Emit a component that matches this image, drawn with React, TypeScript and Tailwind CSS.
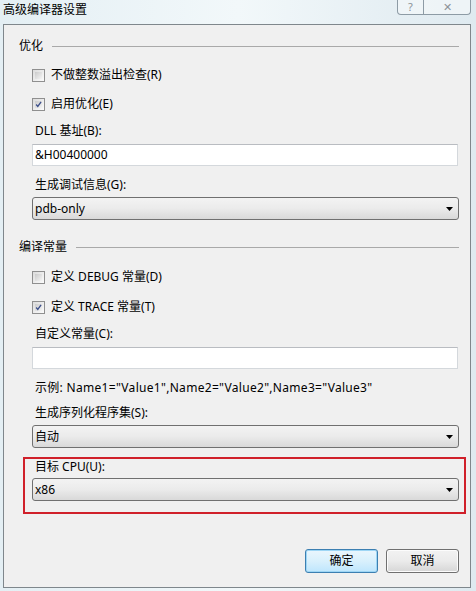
import React from "react";

const font = { fontFamily: '"Noto Sans", "Noto Sans CJK SC", sans-serif' };

function CheckBox({ checked, label }: { checked?: boolean; label: string }) {
  return (
    <div className="flex items-center h-[16px]">
      <span className="w-[13px] h-[13px] border border-[#8f8f8f] bg-gradient-to-br from-[#dcdcdc] to-[#fbfbfb] p-[2px] flex items-center justify-center">
        <span className="w-full h-full bg-gradient-to-br from-[#cbcbcb] to-[#f4f4f4] flex items-center justify-center">
          {checked && (
            <svg width="9" height="9" viewBox="0 0 9 9">
              <path d="M1.5 4.5 L3.6 7 L7.8 1.2" fill="none" stroke="#3c4f8a" strokeWidth="1.7" />
            </svg>
          )}
        </span>
      </span>
      <span className="ml-[6px] text-[12px] leading-[16px] text-[#000]">{label}</span>
    </div>
  );
}

function Label({ children, wide }: { children: React.ReactNode; wide?: boolean }) {
  return (
    <div className={wide ? "pl-[3px] text-[12px] leading-[16px] text-[#000] tracking-[0.3px]" : "pl-[3px] text-[12px] leading-[16px] text-[#000]"}>
      {children}
    </div>
  );
}

function TextBox({ value }: { value?: string }) {
  return (
    <div className="h-[22px] w-[426px] bg-white border border-[#d4d8dc] border-t-[#b9bcc1] flex items-center px-[2px] text-[12px] text-[#000]">
      {value}
    </div>
  );
}

function Select({ value }: { value: string }) {
  return (
    <div className="h-[23px] w-[427px] rounded-[3px] border border-[#707070] bg-gradient-to-b from-[#f3f3f3] via-[#ebebeb] to-[#d9d9d9] flex items-center justify-between pl-[2px] pr-[5px] text-[12px] text-[#000]">
      <span>{value}</span>
      <svg width="7" height="4" viewBox="0 0 7 4">
        <path d="M0 0 H7 L3.5 4 Z" fill="#000" />
      </svg>
    </div>
  );
}

function Heading({ title }: { title: string }) {
  return (
    <div className="flex items-center h-[16px] pl-[15px] pr-[11px]">
      <span className="text-[12px] leading-[16px] text-[#000]">{title}</span>
      <span className="flex-1 ml-[9px] h-px bg-[#a9a9a9]" />
    </div>
  );
}

export default function App() {
  return (
    <div
      className="w-[476px] h-[591px] bg-gradient-to-r from-[#e4eff4] via-[#f2f8fa] to-[#dfeaf0] flex flex-col"
      style={font}
    >
      {/* title bar */}
      <div className="h-[24px] flex items-start justify-between">
        <span className="ml-[3px] mt-[2px] text-[12px] leading-[16px] text-[#000]">高级编译器设置</span>
        <div className="mr-[5px] flex h-[15px] border border-t-0 border-[#8d9ba5] rounded-b-[4px] bg-[#f4f8fa]/70">
          <span className="w-[26px] flex items-center justify-center text-[11px] text-[#8b9297] border-r border-[#8d9ba5]">?</span>
          <span className="w-[46px] flex items-center justify-center text-[11px] text-[#8b9297]">✕</span>
        </div>
      </div>

      {/* client area */}
      <div className="mx-[3px] mr-[5px] h-[564px] border border-[#7f878c] bg-[#f0f0f0] flex flex-col">
        <div className="mt-[13px]">
          <Heading title="优化" />
        </div>
        <div className="ml-[28px] w-[427px] flex flex-col">
          <div className="mt-[13px]">
            <CheckBox label="不做整数溢出检查(R)" />
          </div>
          <div className="mt-[13px]">
            <CheckBox checked label="启用优化(E)" />
          </div>
          <div className="mt-[11px]">
            <Label>DLL 基址(B):</Label>
          </div>
          <div className="mt-[5px]">
            <TextBox value="&H00400000" />
          </div>
          <div className="mt-[11px]">
            <Label>生成调试信息(G):</Label>
          </div>
          <div className="mt-[4px]">
            <Select value="pdb-only" />
          </div>
        </div>

        <div className="mt-[19px]">
          <Heading title="编译常量" />
        </div>
        <div className="ml-[28px] w-[427px] flex flex-col">
          <div className="mt-[14px]">
            <CheckBox label="定义 DEBUG 常量(D)" />
          </div>
          <div className="mt-[14px]">
            <CheckBox checked label="定义 TRACE 常量(T)" />
          </div>
          <div className="mt-[11px]">
            <Label>自定义常量(C):</Label>
          </div>
          <div className="mt-[5px]">
            <TextBox />
          </div>
          <div className="mt-[11px]">
            <Label wide>示例: Name1="Value1",Name2="Value2",Name3="Value3"</Label>
          </div>
          <div className="mt-[9px]">
            <Label>生成序列化程序集(S):</Label>
          </div>
          <div className="mt-[4px]">
            <Select value="自动" />
          </div>
          <div className="mt-[9px] -ml-[9px] -mr-[7px] border-2 border-[#d0202a] pl-[7px] pr-[5px] pb-[11px]">
            <Label>目标 CPU(U):</Label>
            <div className="mt-[3px]">
              <Select value="x86" />
            </div>
          </div>
        </div>

        <div className="mt-[35px] flex justify-end gap-[8px] pr-[11px]">
          <button className="w-[73px] h-[24px] rounded-[3px] border border-[#3c7fb1] bg-gradient-to-b from-[#eaf6fd] via-[#d9f0fc] to-[#bee6fd] text-[12px] text-[#000] shadow-[inset_0_0_0_1px_#9ed6f5]">
            确定
          </button>
          <button className="w-[73px] h-[24px] rounded-[3px] border border-[#707070] bg-gradient-to-b from-[#f2f2f2] via-[#ebebeb] to-[#d6d6d6] text-[12px] text-[#000] shadow-[inset_0_0_0_1px_#fcfcfc]">
            取消
          </button>
        </div>
      </div>
    </div>
  );
}
